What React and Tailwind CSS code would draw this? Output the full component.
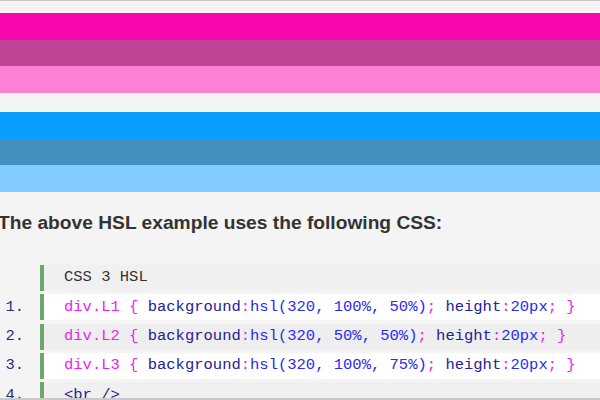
import React from "react";

const M = "text-[#ee22ee]";
const K = "text-[#22229a]";
const V = "text-[#2a2aee]";

function Row({ num, bg, children }) {
  return (
    <div className="flex h-[26px]">
      <div className="w-[40px] shrink-0 flex items-center justify-end pr-[16px] text-[#2a2a8a]">{num}</div>
      <div className={`flex-1 flex items-center border-l-4 border-[#6aa86e] pl-[20px] whitespace-pre ${bg}`}>{children}</div>
    </div>
  );
}

function Rule({ sel, s, li }) {
  return (
    <>
      <span className={M}>{`div.${sel} { `}</span>
      <span className={K}>background</span>
      <span className={M}>:</span>
      <span className={V}>{`hsl(320, ${s}, ${li})`}</span>
      <span className={M}>; </span>
      <span className={K}>height</span>
      <span className={M}>:</span>
      <span className={V}>20px</span>
      <span className={M}>{"; }"}</span>
    </>
  );
}

export default function App() {
  return (
    <div className="w-[600px] h-[400px] overflow-hidden bg-[#f4f4f4] border-t border-b-2 border-[#c8c8c8] font-['Liberation_Sans',Arial,sans-serif]">
      <div className="pt-[12px]">
        <div className="h-[27px] bg-[#fa06ad]" />
        <div className="h-[26px] bg-[#bf4495]" />
        <div className="h-[27px] bg-[#fd80d6]" />
      </div>
      <div className="mt-[19px]">
        <div className="h-[27px] bg-[#0a9fff]" />
        <div className="h-[26px] bg-[#438fc0]" />
        <div className="h-[27px] bg-[#82cdff]" />
      </div>
      <div className="h-[73px] flex items-center -ml-[2px] pb-[10px] text-[19.2px] font-bold text-[#333333] whitespace-nowrap">
        The above HSL example uses the following CSS:
      </div>
      <div className="flex flex-col gap-[3.33px] font-['Liberation_Mono','Courier_New',monospace] text-[15.5px]">
        <Row num="" bg="bg-[#f0f0f0]"><span className="text-[#333333]">CSS 3 HSL</span></Row>
        <Row num="1." bg="bg-white"><Rule sel="L1" s="100%" li="50%" /></Row>
        <Row num="2." bg="bg-[#eeeeee]"><Rule sel="L2" s="50%" li="50%" /></Row>
        <Row num="3." bg="bg-white"><Rule sel="L3" s="100%" li="75%" /></Row>
        <Row num="4." bg="bg-[#f0f0f0]"><span className={K}>{"<br />"}</span></Row>
      </div>
    </div>
  );
}
